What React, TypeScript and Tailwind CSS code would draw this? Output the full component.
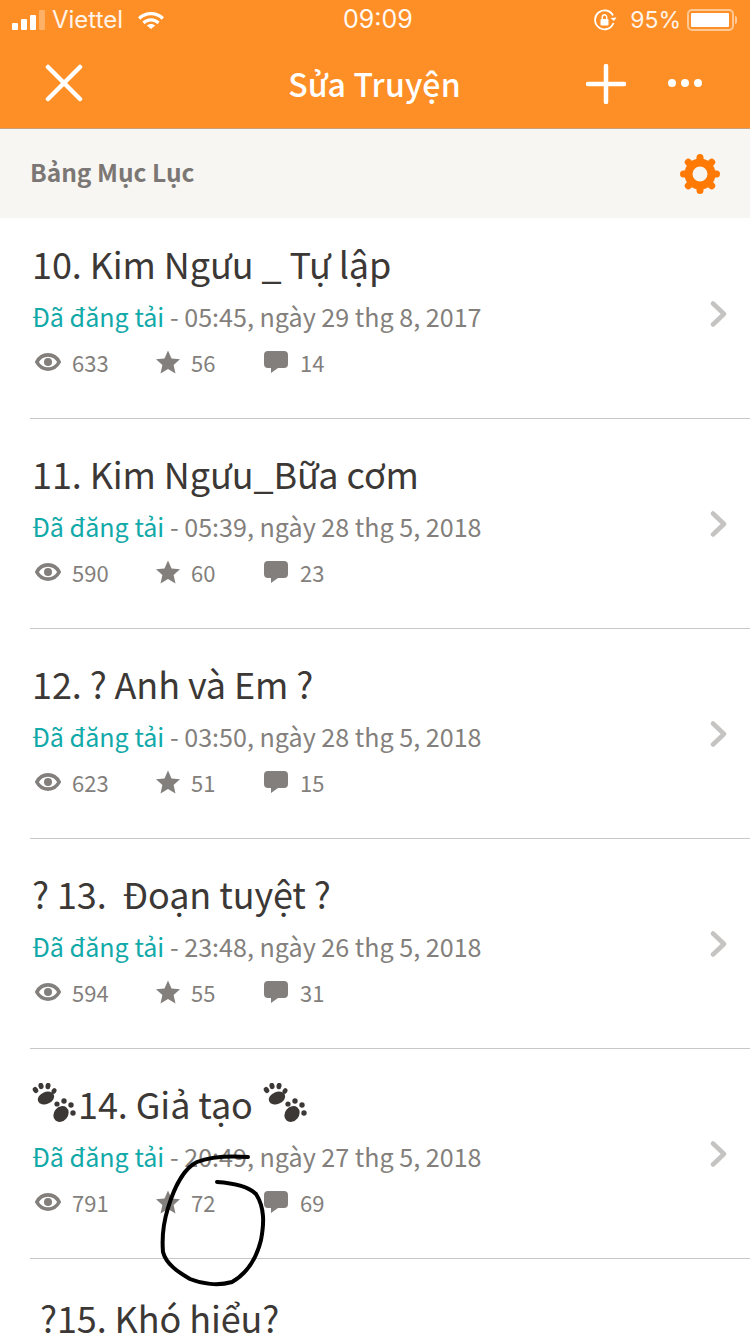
import React from 'react';

interface Chapter {
  title: React.ReactNode;
  published?: string;
  views?: number;
  stars?: number;
  comments?: number;
}

const PawPair: React.FC = () => (
  <svg viewBox="0 0 45 40" className="w-[45px] h-[40px] shrink-0" fill="#3c3836">
    <g>
      <ellipse cx="14" cy="15" rx="8.500" ry="6" transform="rotate(-22 14 15)" />
      <ellipse cx="3.500" cy="7" rx="2.500" ry="3.200" transform="rotate(-35 3.500 7)" />
      <ellipse cx="9" cy="3" rx="2.500" ry="3.200" transform="rotate(-15 9 3)" />
      <ellipse cx="16" cy="3" rx="2.500" ry="3.200" transform="rotate(10 16 3)" />
      <ellipse cx="22" cy="8" rx="2.300" ry="3" transform="rotate(30 22 8)" />
    </g>
    <g>
      <ellipse cx="29" cy="31" rx="7" ry="8.500" transform="rotate(40 29 31)" />
      <circle cx="25" cy="21" r="2.600" />
      <circle cx="32" cy="18" r="2.700" />
      <circle cx="39" cy="22" r="2.700" />
      <circle cx="41" cy="30" r="2.700" />
    </g>
  </svg>
);

const chapters: Chapter[] = [
  { title: '10. Kim Ngưu _ Tự lập', published: '05:45, ngày 29 thg 8, 2017', views: 633, stars: 56, comments: 14 },
  { title: '11. Kim Ngưu_Bữa cơm', published: '05:39, ngày 28 thg 5, 2018', views: 590, stars: 60, comments: 23 },
  { title: '12. ? Anh và Em ?', published: '03:50, ngày 28 thg 5, 2018', views: 623, stars: 51, comments: 15 },
  { title: '? 13.  Đoạn tuyệt ?', published: '23:48, ngày 26 thg 5, 2018', views: 594, stars: 55, comments: 31 },
  {
    title: (
      <>
        <PawPair />
        <span className="ml-px">14. Giả tạo</span>
        <span className="ml-[10px]">
          <PawPair />
        </span>
      </>
    ),
    published: '20:49, ngày 27 thg 5, 2018',
    views: 791,
    stars: 72,
    comments: 69,
  },
];

const EyeIcon = () => (
  <svg viewBox="0 0 26 18" className="w-[26px] h-[18px]">
    <path d="M1.800 9C4.500 4 8.500 1.900 13 1.900S21.500 4 24.200 9C21.500 14 17.500 16.100 13 16.100S4.500 14 1.800 9Z" fill="none" stroke="#837f7c" strokeWidth="3.600" />
    <circle cx="13" cy="9" r="4" fill="#837f7c" />
  </svg>
);

const StarIcon = () => (
  <svg viewBox="0 0 24 24" className="w-[24px] h-[24px]" fill="#837f7c">
    <path d="M12 0.500l3.500 8 8.500 0.800-6.400 5.700 1.900 8.500L12 19l-7.500 4.500 1.900-8.500L0 9.300l8.500-0.800z" />
  </svg>
);

const CommentIcon = () => (
  <svg viewBox="0 0 24 22" className="w-[24px] h-[22px]" fill="#837f7c">
    <path d="M4 0h16a4 4 0 0 1 4 4v9a4 4 0 0 1-4 4h-6l-7 5v-5H4a4 4 0 0 1-4-4V4a4 4 0 0 1 4-4z" />
  </svg>
);

const GearIcon = () => (
  <svg viewBox="0 0 40 40" className="w-[40px] h-[40px]" stroke="#ff7a05" fill="none">
    <circle cx="20" cy="20" r="11.500" strokeWidth="8" />
    <g strokeWidth="7" strokeLinecap="round">
      <path d="M20 3.500v3" />
      <path d="M20 33.500v3" />
      <path d="M3.500 20h3" />
      <path d="M33.500 20h3" />
      <path d="M8.300 8.300l2.200 2.200" />
      <path d="M29.500 29.500l2.200 2.200" />
      <path d="M31.700 8.300l-2.200 2.200" />
      <path d="M10.500 29.500l-2.200 2.200" />
    </g>
  </svg>
);

const StatusBar: React.FC = () => (
  <div className="relative h-[40px] flex items-center justify-between pl-[12px] pr-[13px] text-white text-[24px] font-['Inter',sans-serif]">
    <div className="flex items-center">
      <div className="flex items-end gap-[3px] h-[21px] w-[33px] pb-px">
        <div className="w-[6px] h-[7px] bg-white rounded-[1px]" />
        <div className="w-[6px] h-[11px] bg-white rounded-[1px]" />
        <div className="w-[6px] h-[15px] bg-white rounded-[1px]" />
        <div className="w-[6px] h-[20px] bg-white/30 rounded-[1px]" />
      </div>
      <span className="ml-[7px] opacity-90">Viettel</span>
      <svg viewBox="0 0 28 20" className="w-[28px] h-[20px] ml-[14px]" fill="white">
        <path d="M14 2C8.800 2 4.200 4 1 7.300l2.300 2.400C6 7 9.800 5.300 14 5.300S22 7 24.700 9.700L27 7.300C23.800 4 19.200 2 14 2z" />
        <path d="M14 8.300c-3.400 0-6.400 1.300-8.600 3.500l2.300 2.400c1.600-1.600 3.800-2.600 6.300-2.600s4.700 1 6.300 2.600l2.300-2.400C20.400 9.600 17.400 8.300 14 8.300z" />
        <path d="M14 19l-4.200-3.400c1-1 2.600-1.700 4.200-1.700s3.200 0.700 4.200 1.700z" />
      </svg>
    </div>
    <span className="absolute left-[343px] text-[25px] opacity-95">09:09</span>
    <div className="flex items-center">
      <svg viewBox="0 0 24 22" className="w-[24px] h-[22px]" fill="none" stroke="white">
        <path d="M20 6.500A9.500 9.500 0 1 0 20.500 14" strokeWidth="1.800" />
        <path d="M17.500 9l3.500 3 2.500-3.500z" fill="white" stroke="none" />
        <rect x="7.500" y="10" width="8" height="6.500" rx="1" fill="white" stroke="none" />
        <path d="M9.300 10V8a2.200 2.200 0 0 1 4.400 0v2" strokeWidth="1.400" />
      </svg>
      <span className="ml-[13px] text-[23px] opacity-90">95%</span>
      <div className="ml-[6px] w-[47px] h-[22px] border-2 border-white/50 rounded-[5px] p-[2px]">
        <div className="w-[38px] h-full bg-white rounded-[1px]" />
      </div>
      <div className="ml-px w-[2px] h-[8px] bg-white/50 rounded-r-full" />
    </div>
  </div>
);

const ChapterRow: React.FC<{ chapter: Chapter; first: boolean }> = ({ chapter, first }) => (
  <div className={`ml-[30px] pr-[22px] flex items-center justify-between border-b border-[#c9c7c5] ${first ? 'h-[201px]' : 'h-[210px]'}`}>
    <div className={`pl-[2px] self-start ${first ? 'pt-[19px]' : 'pt-[28px]'}`}>
      <div className="h-[52px] flex items-center text-[36px] leading-[52px] tracking-[-0.1px] text-[#3c3836] whitespace-pre">
        {chapter.title}
      </div>
      <div className="mt-[3px] h-[50px] flex items-center text-[25.1px] text-[#837f7c] whitespace-pre">
        <span className="text-[#12a9a9]">Đã đăng tải</span>
        <span> - {chapter.published}</span>
      </div>
      <div className="h-[40px] flex items-center text-[22px] text-[#837f7c]">
        <div className="w-[124px] flex items-center pl-[3px]">
          <EyeIcon />
          <span className="ml-[11px]">{chapter.views}</span>
        </div>
        <div className="w-[108px] flex items-center">
          <StarIcon />
          <span className="ml-[11px]">{chapter.stars}</span>
        </div>
        <div className="flex items-center">
          <CommentIcon />
          <span className="ml-[12px]">{chapter.comments}</span>
        </div>
      </div>
    </div>
    <svg viewBox="0 0 18 26" className={`w-[18px] h-[26px] shrink-0 ${first ? '-mt-[8px]' : ''}`} fill="none" stroke="#c6c4c2" strokeWidth="4.500" strokeLinecap="round" strokeLinejoin="round">
      <path d="M3 2.500L14 13 3 23.500" />
    </svg>
  </div>
);

export default function App() {
  return (
    <div className="relative w-[750px] h-[1334px] overflow-hidden bg-white font-['Noto_Sans_CJK_SC','Noto_Sans',sans-serif]">
      {/* Header */}
      <div className="bg-[#fe8f26] border-b border-[#c9a27d]">
        <StatusBar />
        <div className="relative h-[88px] flex items-center justify-center">
          <svg viewBox="0 0 38 38" className="absolute left-[45px] top-[24px] w-[38px] h-[38px]" stroke="white" strokeWidth="4.500" strokeLinecap="round">
            <path d="M3 3l32 32M35 3L3 35" />
          </svg>
          <span className="text-white text-[32px] font-medium tracking-[0.2px] -mt-[2px] -ml-[1px]">Sửa Truyện</span>
          <svg viewBox="0 0 40 40" className="absolute left-[586px] top-[24px] w-[40px] h-[40px]" stroke="white" strokeWidth="4.500" strokeLinecap="round">
            <path d="M20 2v36M2 20h36" />
          </svg>
          <div className="absolute left-[668px] top-[39px] flex gap-[5px]">
            <div className="w-[8px] h-[8px] bg-white rounded-full" />
            <div className="w-[8px] h-[8px] bg-white rounded-full" />
            <div className="w-[8px] h-[8px] bg-white rounded-full" />
          </div>
        </div>
      </div>

      {/* Section bar */}
      <div className="h-[89px] bg-[#f8f6f2] flex items-center justify-between pl-[30px] pr-[30px]">
        <span className="text-[24.5px] font-semibold text-[#7b7775] -mt-[3px]">Bảng Mục Lục</span>
        <GearIcon />
      </div>

      {/* Chapter list */}
      {chapters.map((chapter, i) => (
        <ChapterRow key={i} chapter={chapter} first={i === 0} />
      ))}
      <div className="ml-[40px] pt-[39px] h-[76px] flex items-center text-[36px] leading-[36px] tracking-[-0.1px] text-[#3c3836]">?15. Khó hiểu?</div>

      {/* Hand-drawn circle on top of the screenshot */}
      <svg viewBox="0 0 750 1334" className="absolute inset-0 w-[750px] h-[1334px] pointer-events-none" fill="none" stroke="#000" strokeWidth="4" strokeLinecap="round" strokeLinejoin="round">
        <path d="M248 1157C232 1156 212 1156 197 1162C184 1168 174 1188 168 1208C163 1224 162 1240 163 1252C166 1264 178 1272 190 1279C202 1284 218 1286 232 1282C246 1274 256 1260 261 1240C264 1224 265 1208 256 1194C248 1186 232 1183 217 1182" />
      </svg>
    </div>
  );
}
